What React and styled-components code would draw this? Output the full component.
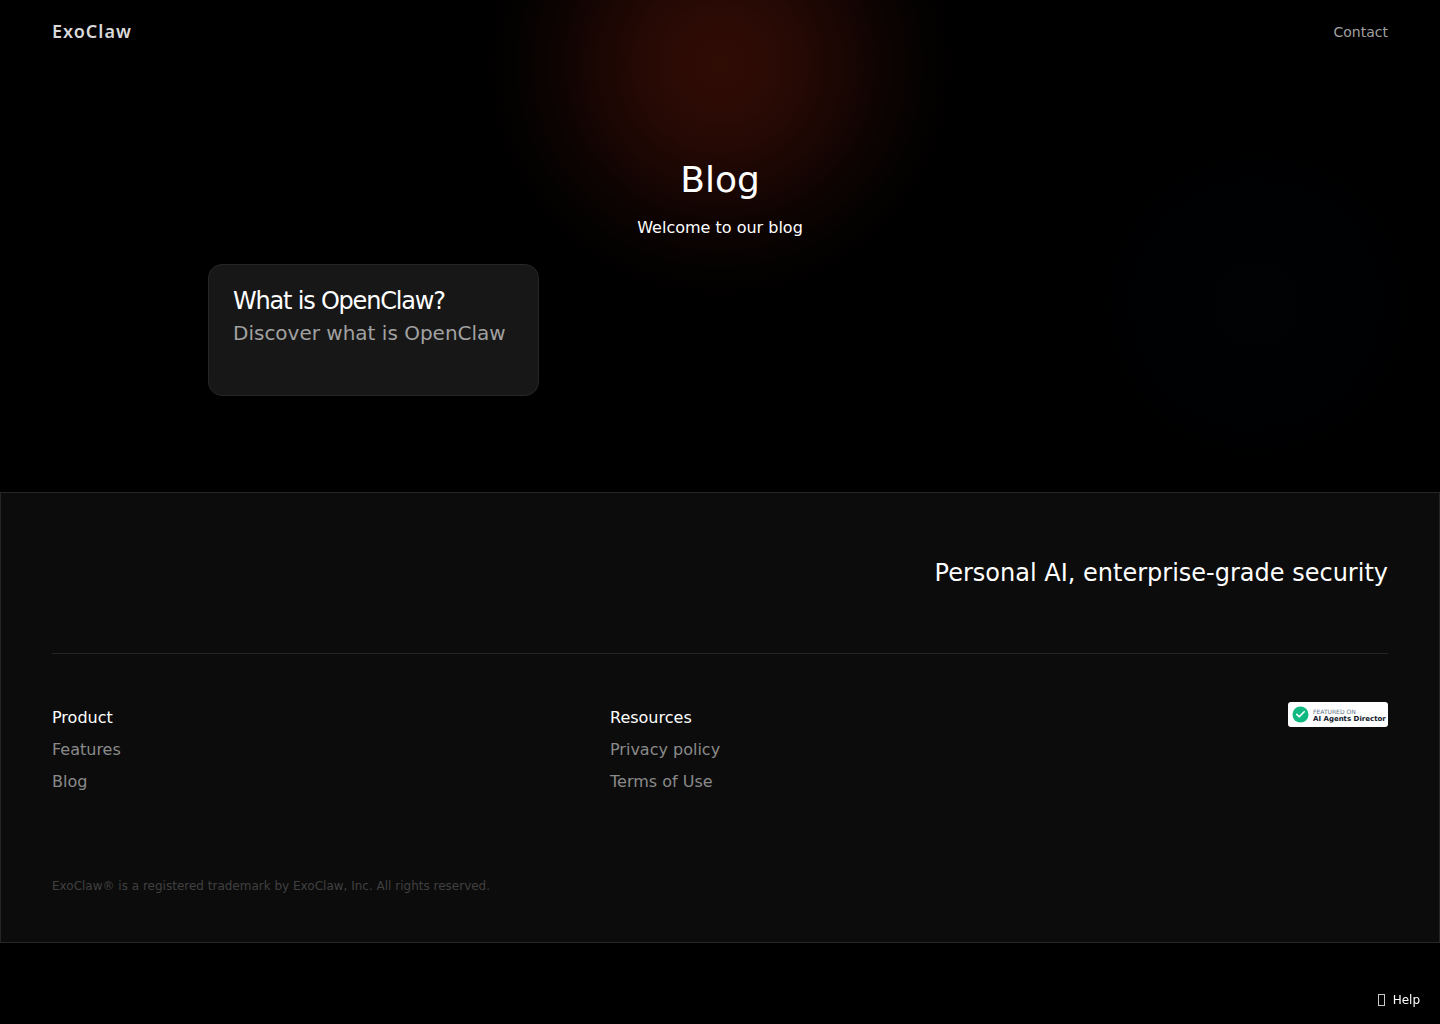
import styled, {createGlobalStyle} from 'styled-components'

const GlobalStyle = createGlobalStyle`
  * {
    box-sizing: border-box;
    margin: 0;
    padding: 0;
  }
  body {
    background-color: #000;
    color: #fff;
    font-family: 'DejaVu Sans', sans-serif;
    font-size: 16px;
    line-height: 24px;
  }
  a {
    color: inherit;
    text-decoration: none;
  }
  ul {
    list-style: none;
  }
`

const Page = styled.div`
  min-height: 100vh;
  background-image: radial-gradient(
      circle 256px at 50% 64px,
      #300c05 0%,
      #2d0b05 14%,
      #250904 32%,
      #190603 49%,
      #0c0302 66%,
      #040201 80%,
      #010000 92%,
      #000 100%
    ),
    radial-gradient(circle 190px at calc(100% - 184px) 304px, #010204, #000103 50%, #000);
  background-blend-mode: screen;
`

const Nav = styled.nav`
  display: flex;
  align-items: center;
  justify-content: space-between;
  height: 64px;
  padding: 0 52px;
`

const Logo = styled.a`
  padding-bottom: 2px;
  color: #d9d9d9;
  font-family: 'Noto Sans', 'Open Sans', sans-serif;
  font-size: 18px;
  font-weight: 600;
  letter-spacing: 1px;
`

const NavLink = styled.a`
  color: #a1a1a1;
  font-size: 14px;
`

const Main = styled.main`
  max-width: 1072px;
  margin: 0 auto;
  padding: 96px 24px;
`

const Intro = styled.header`
  display: flex;
  flex-direction: column;
  gap: 16px;
  text-align: center;
  h1 {
    font-size: 36px;
    font-weight: 400;
    line-height: 40px;
  }
`

const Posts = styled.div`
  display: grid;
  grid-template-columns: repeat(3, 1fr);
  gap: 16px;
  margin-top: 24px;
  @media (max-width: 900px) {
    grid-template-columns: 1fr;
  }
`

const PostCard = styled.a`
  min-height: 132px;
  padding: 20px 24px;
  border: 1px solid #262626;
  border-radius: 14px;
  background-color: #171717;
  h2 {
    font-size: 24px;
    font-weight: 400;
    line-height: 32px;
    letter-spacing: -0.05em;
  }
  p {
    color: #a1a1a1;
    font-size: 20px;
    line-height: 32px;
  }
`

const Footer = styled.footer`
  padding: 60px 51px 44px;
  border: 1px solid #262626;
  background-color: #0c0c0c;
`

const Tagline = styled.p`
  padding-bottom: 60px;
  border-bottom: 1px solid #262626;
  font-size: 24px;
  line-height: 40px;
  text-align: right;
`

const FooterColumns = styled.div`
  display: flex;
  flex-wrap: wrap;
  justify-content: space-between;
  padding: 48px 0 76px;
`

const Column = styled.div`
  width: 220px;
  h3 {
    font-size: 16px;
    font-weight: 400;
    line-height: 32px;
  }
  li {
    color: #8a8a8a;
    line-height: 32px;
  }
`

const BadgeColumn = styled(Column)`
  display: flex;
  justify-content: flex-end;
`

const Badge = styled.a`
  display: flex;
  align-items: center;
  gap: 4px;
  width: 100px;
  height: 25px;
  padding-left: 4px;
  border-radius: 3px;
  background-color: #fff;
  white-space: nowrap;
  svg {
    flex-shrink: 0;
  }
`

const BadgeText = styled.span`
  display: flex;
  flex-direction: column;
  padding-top: 1px;
  color: #64748b;
  font-size: 6px;
  line-height: 7px;
  strong {
    color: #0f172a;
    font-size: 7px;
    line-height: 8px;
  }
`

const Legal = styled.p`
  color: #404040;
  font-size: 12px;
`

const HelpButton = styled.button`
  position: fixed;
  right: 20px;
  bottom: 16px;
  display: flex;
  align-items: center;
  gap: 8px;
  border: 0;
  background: none;
  color: #fff;
  font-family: inherit;
  font-size: 12px;
  line-height: 16px;
  cursor: pointer;
`

const HelpIcon = styled.span`
  width: 7px;
  height: 12px;
  border: 1px solid #c8c8c8;
`

const posts = [{title: 'What is OpenClaw?', text: 'Discover what is OpenClaw'}]

const columns = [
  {title: 'Product', links: ['Features', 'Blog']},
  {title: 'Resources', links: ['Privacy policy', 'Terms of Use']},
]

const App = () => {
  return (
    <Page>
      <GlobalStyle />
      <Nav>
        <Logo href="#">ExoClaw</Logo>
        <NavLink href="#">Contact</NavLink>
      </Nav>
      <Main>
        <Intro>
          <h1>Blog</h1>
          <p>Welcome to our blog</p>
        </Intro>
        <Posts>
          {posts.map((post) => (
            <PostCard
              key={post.title}
              href="#">
              <h2>{post.title}</h2>
              <p>{post.text}</p>
            </PostCard>
          ))}
        </Posts>
      </Main>
      <Footer>
        <Tagline>Personal AI, enterprise-grade security</Tagline>
        <FooterColumns>
          {columns.map((column) => (
            <Column key={column.title}>
              <h3>{column.title}</h3>
              <ul>
                {column.links.map((link) => (
                  <li key={link}>
                    <a href="#">{link}</a>
                  </li>
                ))}
              </ul>
            </Column>
          ))}
          <BadgeColumn>
            <Badge href="#">
              <svg
                width="17"
                height="17"
                viewBox="0 0 17 17"
                fill="none">
                <circle
                  cx="8.5"
                  cy="8.5"
                  r="8"
                  fill="#10b981"
                />
                <path
                  d="M4.8 8.4l2.4 2.4 5-5"
                  stroke="#fff"
                  strokeWidth="1.6"
                  strokeLinecap="round"
                  strokeLinejoin="round"
                />
              </svg>
              <BadgeText>
                FEATURED ON
                <strong>AI Agents Director</strong>
              </BadgeText>
            </Badge>
          </BadgeColumn>
        </FooterColumns>
        <Legal>ExoClaw® is a registered trademark by ExoClaw, Inc. All rights reserved.</Legal>
      </Footer>
      <HelpButton type="button">
        <HelpIcon />
        Help
      </HelpButton>
    </Page>
  )
}

export default App
